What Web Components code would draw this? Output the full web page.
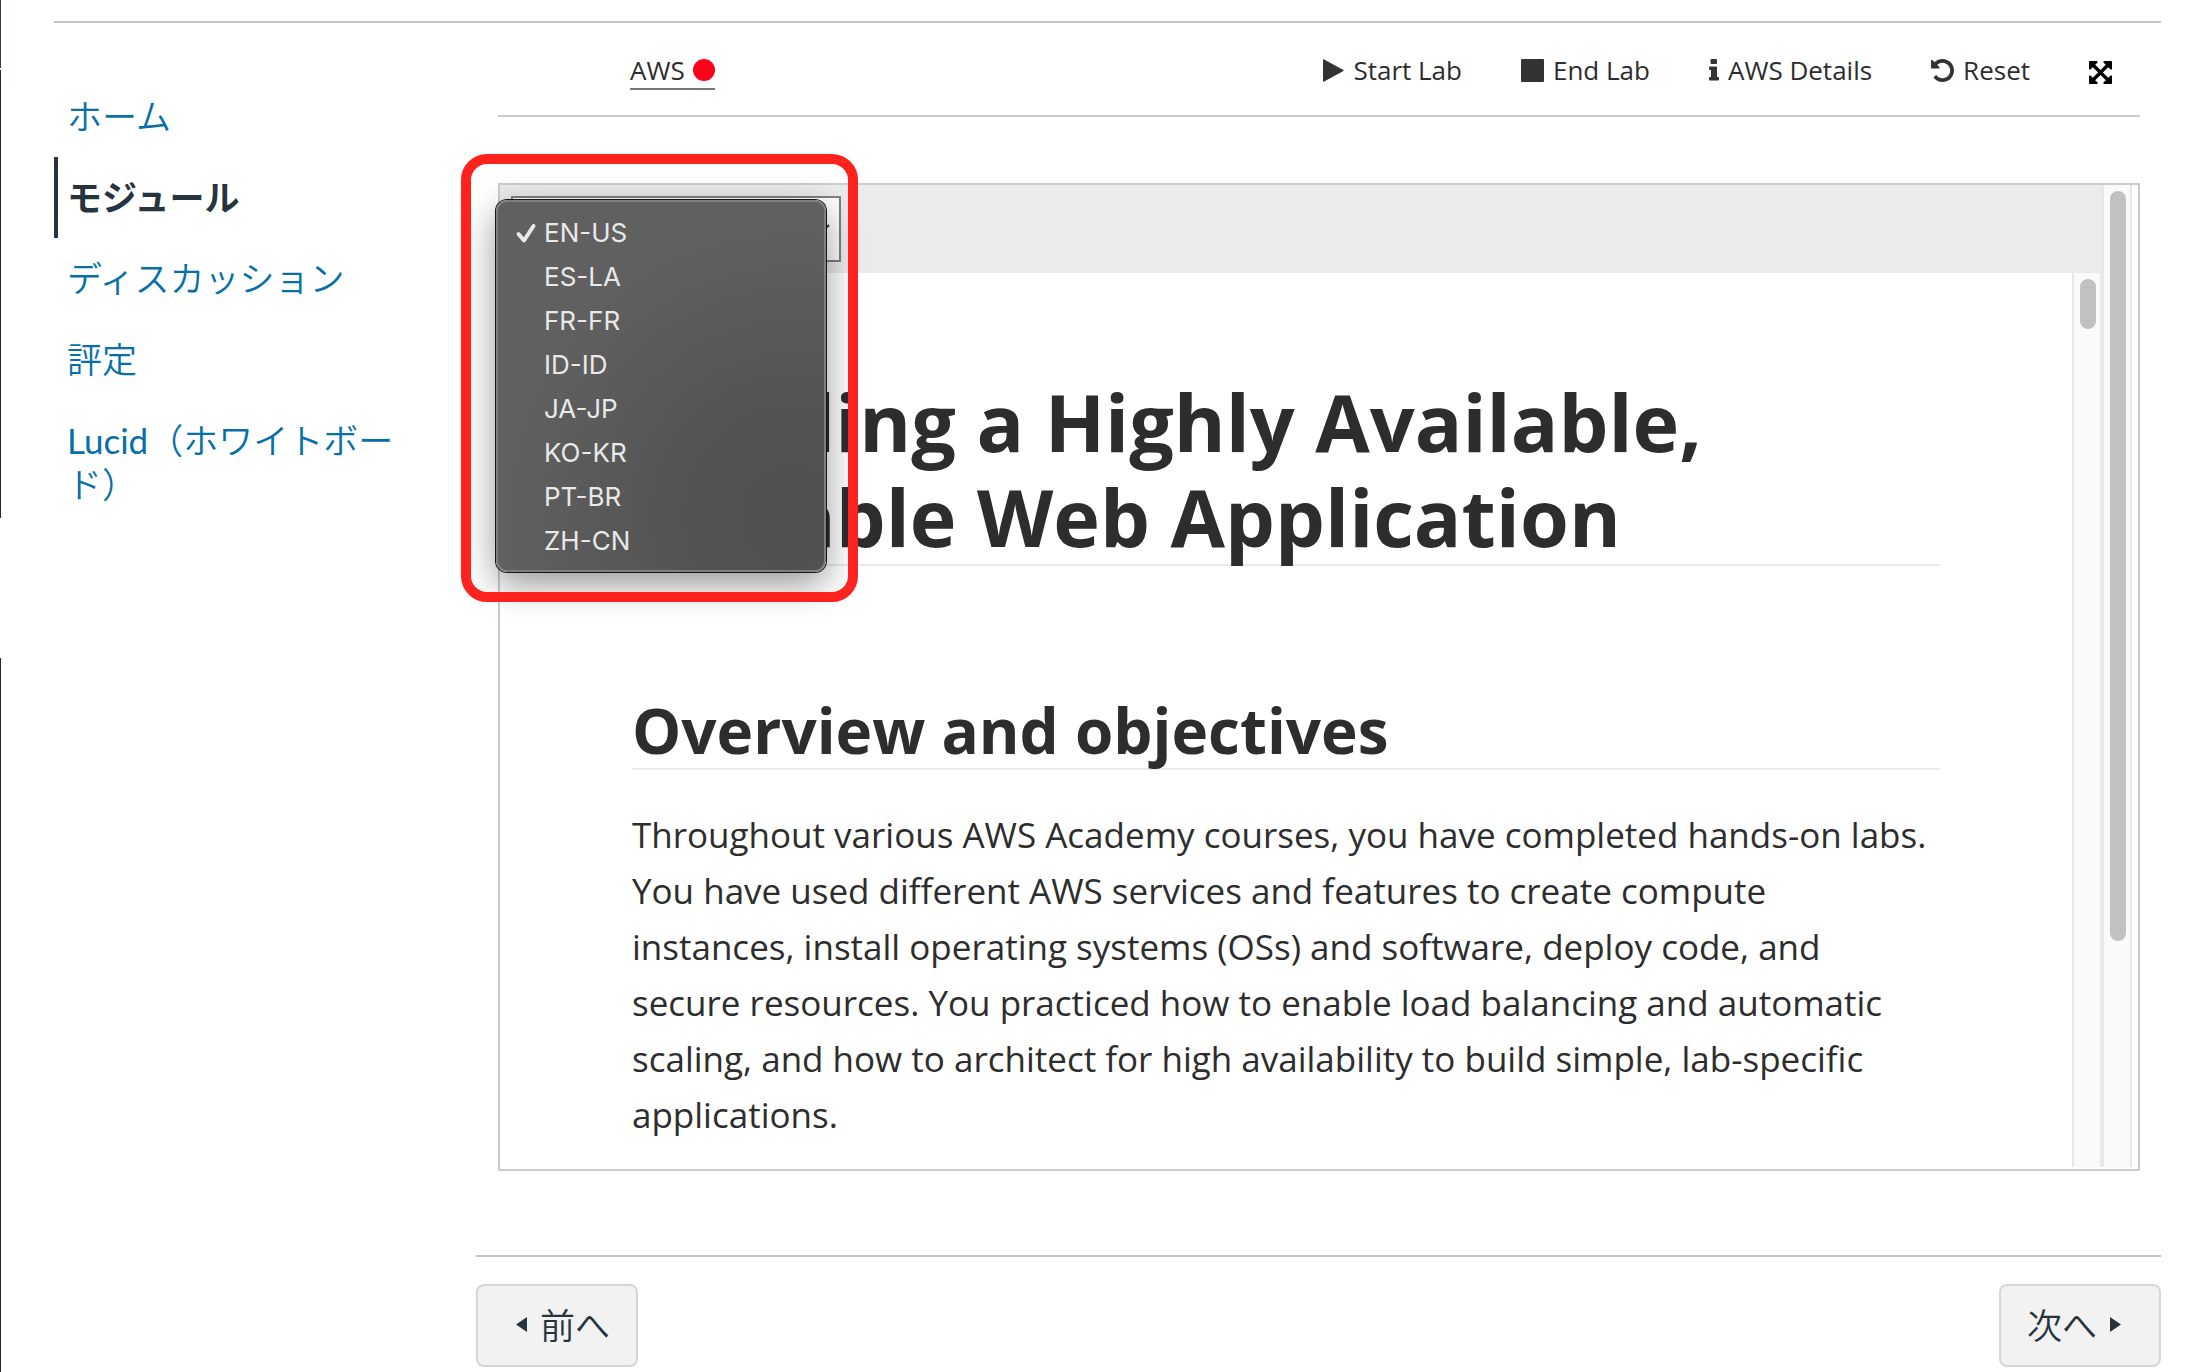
<!DOCTYPE html>
<html lang="ja">
<head>
<meta charset="utf-8">
<title>モジュール</title>
<style>
  html, body { margin: 0; min-height: 100%; background: #fff; }
  body { font-family: "Open Sans", "Noto Sans", sans-serif; color: #2d2d2d; }
</style>
</head>
<body>
<course-page>
  <course-nav slot="nav">
    <nav-item>ホーム</nav-item>
    <nav-item current>モジュール</nav-item>
    <nav-item>ディスカッション</nav-item>
    <nav-item>評定</nav-item>
    <nav-item>Lucid（ホワイトボード）</nav-item>
  </course-nav>
  <lab-toolbar>
    <tool-button icon="play">Start Lab</tool-button>
    <tool-button icon="stop">End Lab</tool-button>
    <tool-button icon="info">AWS Details</tool-button>
    <tool-button icon="undo">Reset</tool-button>
    <tool-button icon="expand" label="Fullscreen"></tool-button>
  </lab-toolbar>
  <lab-panel>
    <language-picker slot="bar"></language-picker>
    <lab-document></lab-document>
  </lab-panel>
  <page-footer slot="footer"></page-footer>
</course-page>

<script>
const define = (name, html, setup) => {
  const tpl = document.createElement('template');
  tpl.innerHTML = html;
  customElements.define(name, class extends HTMLElement {
    constructor() {
      super();
      this.attachShadow({ mode: 'open' }).append(tpl.content.cloneNode(true));
    }
    connectedCallback() { if (setup) setup(this, this.shadowRoot); }
  });
};

define('side-rail', `
<style>
  :host { display: flex; flex-direction: column; width: 1px; }
  i { background: #2d3b45; }
  .a { height: 68px; margin-bottom: 2px; }
  .b { height: 448px; margin-bottom: 140px; background: #1f2d3a; }
  .c { flex: 1; background: #1f2d3a; }
</style>
<i class="a"></i><i class="b"></i><i class="c"></i>`);

define('course-page', `
<style>
  :host { display: flex; min-height: 100vh; }
  .page { flex: 1; min-width: 0; padding: 21px 45px 5px 53px; }
  .body { display: flex; border-top: 2px solid #c2c8cc; }
  ::slotted([slot="nav"]) { flex: none; }
  .content { flex: 1; min-width: 0; }
  .tool { padding: 0 21px 0 22px; }
</style>
<side-rail></side-rail>
<div class="page">
  <div class="body">
    <slot name="nav"></slot>
    <main class="content">
      <div class="tool"><slot></slot></div>
      <slot name="footer"></slot>
    </main>
  </div>
</div>`);

define('course-nav', `
<style>
  :host { display: block; box-sizing: border-box; width: 422px; padding: 53px 68px 0 0; }
</style>
<nav><slot></slot></nav>`);

define('nav-item', `
<style>
  :host { display: block; }
  a { display: block; padding: 18px 0 19px 9px; border-left: 4px solid transparent;
      font: 35px/44px Lato, "Noto Sans CJK JP DemiLight", "Noto Sans CJK JP", sans-serif; color: #0770a9; text-decoration: none; }
  :host([current]) a { border-color: #27343d; color: #27343d; font-family: Lato, "Noto Sans CJK JP", sans-serif; font-weight: 700; }
</style>
<a href="#"><slot></slot></a>`,
(el, root) => { if (el.hasAttribute('current')) root.querySelector('a').setAttribute('aria-current', 'page'); });

define('lab-toolbar', `
<style>
  :host { display: flex; align-items: center; justify-content: space-between; box-sizing: border-box;
          height: 94px; padding: 2px 28px 0 132px; border-bottom: 2px solid #ccc; }
  a { display: flex; align-items: center; gap: 8px; padding-top: 2px; border-bottom: 2px solid #767676;
      color: #2d2d2d; font-size: 26px; line-height: 36px; text-decoration: none; }
  .dot { width: 22px; height: 22px; border-radius: 50%; background: #ff001a; }
  .tools { display: flex; align-items: center; gap: 59px; }
</style>
<a href="#">AWS<span class="dot"></span></a>
<div class="tools"><slot></slot></div>`);

const ICONS = {
  play: '<svg width="21" height="23" viewBox="0 0 21 23"><path d="M0 .6Q0 0 .7.3L20.4 11Q21.200 11.500 20.400 12L.7 22.700Q0 23 0 22.400Z"/></svg>',
  stop: '<svg width="23" height="23" viewBox="0 0 23 23"><rect width="23" height="23" rx="1"/></svg>',
  info: '<svg width="10" height="23" viewBox="0 0 10 23"><path d="M2.500 0h4.500q1 0 1 1v3q0 1-1 1h-4.500q-1 0-1-1v-3q0-1 1-1zM1 7.500h6.200q.8 0 .8.800v9.700h1q1 0 1 1v1.500q0 1-1 1h-8q-1 0-1-1v-1.500q0-1 1-1h1v-7h-1q-1 0-1-1v-1.500q0-1 1-1z"/></svg>',
  undo: '<svg width="23" height="23" viewBox="128 128 1536 1536"><path d="M1664 896q0 156-61 298t-164 245-245 164-298 61q-172 0-327-72.500t-264-204.500q-7-10-6.500-22.500t8.500-20.500l137-138q10-9 25-9 16 2 23 12 73 95 179 147t225 52q104 0 198.500-40.500t163.500-109.500 109.500-163.500 40.500-198.500-40.500-198.500-109.500-163.500-163.500-109.500-198.500-40.500q-98 0-188 35.500t-160 101.500l137 138q31 30 14 69-17 40-59 40h-448q-26 0-45-19t-19-45v-448q0-42 40-59 39-17 69 14l130 129q107-101 244.500-156.500t284.500-55.500q156 0 298 61t245 164 164 245 61 298z"/></svg>',
  expand: '<svg width="23" height="23" viewBox="128 128 1536 1536"><path d="M1411 541l-355 355 355 355 144-144q29-31 70-14 39 17 39 59v448q0 26-19 45t-45 19h-448q-42 0-59-40-17-39 14-69l144-144-355-355-355 355 144 144q31 30 14 69-17 40-59 40h-448q-26 0-45-19t-19-45v-448q0-42 40-59 39-17 69 14l144 144 355-355-355-355-144 144q-19 19-45 19-12 0-24-5-40-17-40-59v-448q0-26 19-45t45-19h448q42 0 59 40 17 39-14 69l-144 144 355 355 355-355-144-144q-31-30-14-69 17-40 59-40h448q26 0 45 19t19 45v448q0 42-39 59-13 5-25 5-26 0-45-19z"/></svg>'
};

define('tool-button', `
<style>
  :host { display: block; }
  button { display: flex; align-items: center; gap: 9px; margin: 0; padding: 0; border: 0; background: none;
           color: #2d2d2d; font-family: inherit; font-size: 26px; line-height: 36px; }
  svg { display: block; fill: #333; }
  :host([icon="expand"]) svg { fill: #000; }
  :host([icon="expand"]) button { padding-top: 4px; }
</style>
<button type="button"><span class="icon"></span><slot></slot></button>`,
(el, root) => {
  root.querySelector('.icon').innerHTML = ICONS[el.getAttribute('icon')];
  const label = el.getAttribute('label');
  if (label) root.querySelector('button').setAttribute('aria-label', label);
});

define('scroll-track', `
<style>
  :host { display: block; box-sizing: border-box; flex: none; width: 30px; padding: 6px 4px 6px 6px;
          border: solid #e8e8e8; border-width: 0 2px; background: #fafafa; }
  i { display: block; width: 16px; height: var(--thumb); border-radius: 8px; background: #c1c1c1; }
</style>
<i></i>`);

define('lab-panel', `
<style>
  :host { display: flex; margin-top: 66px; padding: 0 6px 2px 0; border: 2px solid #ccc; }
  .frame { flex: 1; min-width: 0; display: flex; flex-direction: column; }
  .bar { padding: 11px; background: #ebebeb; }
  .view { flex: 1; display: flex; }
  .doc { flex: 1; min-width: 0; }
  .inner { --thumb: 50px; }
  .outer { --thumb: 750px; }
</style>
<div class="frame">
  <div class="bar"><slot name="bar"></slot></div>
  <div class="view"><div class="doc"><slot></slot></div><scroll-track class="inner"></scroll-track></div>
</div>
<scroll-track class="outer"></scroll-track>`);

define('language-picker', `
<style>
  :host { display: block; position: relative; width: 330px; }
  .field { display: grid; align-items: center; }
  .field > * { grid-area: 1 / 1; }
  select { appearance: none; box-sizing: border-box; width: 100%; height: 66px; margin: 0; padding: 0 18px;
           border: 2px solid #808080; border-radius: 0; background: #fff; color: #2d2d2d;
           font-family: inherit; font-size: 26px; }
  .chevron { justify-self: end; margin-right: 10px; fill: none; stroke: #333; stroke-width: 2; pointer-events: none; }
  .menu { position: absolute; z-index: 2; left: -15px; top: 4px; box-sizing: border-box; width: 330px;
          margin: 0; padding: 9px 9px 7px 15px; list-style: none; border: 2px solid #7f7f7f; border-radius: 11px;
          background: radial-gradient(circle at 90% 85%, #505050 0, #525252 90px, #606060 290px) border-box;
          box-shadow: 0 0 0 1px #161616, 0 12px 36px rgba(0,0,0,.42);
          color: #e9e9e9; font: 26px/44px Inter, "Liberation Sans", sans-serif; }
  li { display: flex; align-items: center; }
  .tick { flex: none; width: 31px; display: flex; }
  .mark { position: absolute; z-index: 3; left: -50px; top: -42px; box-sizing: border-box; width: 397px; height: 448px;
          border: 10px solid #ff231f; border-radius: 26px; pointer-events: none; }
</style>
<div class="field">
  <select aria-label="Language">
    <option selected>EN-US</option><option>ES-LA</option><option>FR-FR</option><option>ID-ID</option>
    <option>JA-JP</option><option>KO-KR</option><option>PT-BR</option><option>ZH-CN</option>
  </select>
  <svg class="chevron" width="20" height="12" viewBox="0 0 20 12"><path d="M2 2l8 8 8-8"/></svg>
</div>
<ul class="menu" role="listbox" aria-label="Language"></ul>
<div class="mark"></div>`,
(el, root) => {
  root.querySelector('.menu').innerHTML = [...root.querySelectorAll('option')].map((o, i) =>
    `<li role="option" aria-selected="${i === 0}"><span class="tick">${i === 0 ?
      '<svg width="24" height="24" viewBox="0 0 24 24" fill="none" stroke="#e9e9e9" stroke-width="4" stroke-linecap="round" stroke-linejoin="round"><path d="M5.500 13l5.500 6.500L20.500 5"/></svg>' : ''}</span>${o.textContent}</li>`).join('');
});

define('lab-document', `
<style>
  :host { display: block; padding: 101px 132px 24px; color: #2d2d2d; }
  h1, h2, p { margin: 0; }
  h1, h2 { border-bottom: 2px solid #eaeaea; font-weight: 700; }
  h1 { font-size: 79px; line-height: 95px; }
  h2 { margin-top: 130px; padding-bottom: 4px; font-size: 62px; line-height: 68px; }
  p { margin-top: 37px; padding-right: 8px; font-size: 35px; line-height: 56px; }
</style>
<h1>Building a Highly Available, Scalable Web Application</h1>
<h2>Overview and objectives</h2>
<p>Throughout various AWS Academy courses, you have completed hands-on labs. You have used different AWS services and features to create compute instances, install operating systems (OSs) and software, deploy code, and secure resources. You practiced how to enable load balancing and automatic scaling, and how to architect for high availability to build simple, lab-specific applications.</p>`);

define('page-footer', `
<style>
  :host { display: flex; justify-content: space-between; margin-top: 84px; padding-top: 27px; border-top: 2px solid #c2c8cc; }
  a { display: flex; align-items: center; gap: 13px; box-sizing: border-box; height: 83px; padding: 0 26px 2px;
      border: 2px solid #d6d6d6; border-radius: 8px; background: #f2f2f2; color: #27343d;
      font: 300 35px/44px Lato, "Noto Sans CJK JP DemiLight", "Noto Sans CJK JP", sans-serif; text-decoration: none; }
  .prev { padding-left: 38px; }
  .next { padding-right: 38px; }
  svg { display: block; fill: #27343d; }
</style>
<a class="prev" href="#"><svg width="11" height="15" viewBox="0 0 11 15"><path d="M11 0v15L0 7.500z"/></svg>前へ</a>
<a class="next" href="#">次へ<svg width="11" height="15" viewBox="0 0 11 15"><path d="M0 0v15l11-7.500z"/></svg></a>`);
</script>
</body>
</html>
